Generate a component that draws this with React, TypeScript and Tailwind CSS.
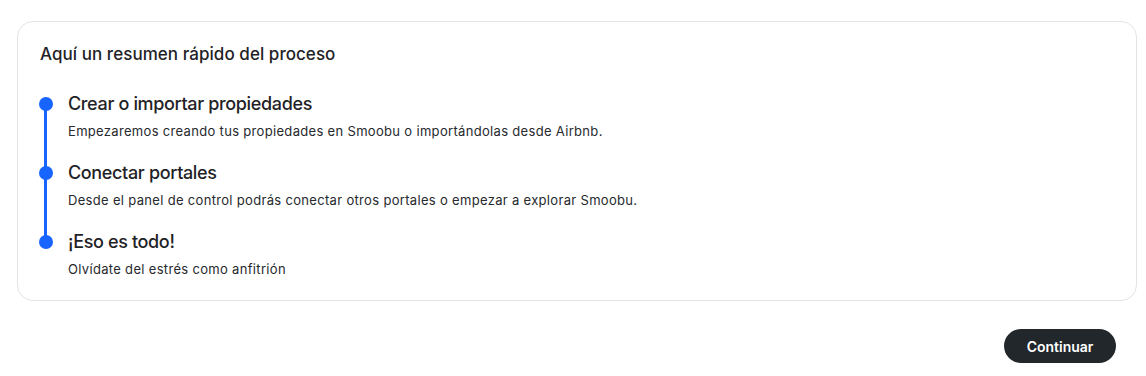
const steps = [
  {
    title: "Crear o importar propiedades",
    text: "Empezaremos creando tus propiedades en Smoobu o importándolas desde Airbnb.",
  },
  {
    title: "Conectar portales",
    text: "Desde el panel de control podrás conectar otros portales o empezar a explorar Smoobu.",
  },
  {
    title: "¡Eso es todo!",
    text: "Olvídate del estrés como anfitrión",
  },
];

export default function App() {
  return (
    <main className="min-h-screen bg-white px-[17px] pt-[21px] font-['Inter',sans-serif] text-[#1f2226]">
      {/* summary card */}
      <section className="w-[1120px] h-[280px] rounded-[16px] border border-[#e3e4e8] pt-[19px]">
        <h2 className="pl-[22px] text-[17px] leading-[26px] font-medium tracking-[0.05px]">
          Aquí un resumen rápido del proceso
        </h2>

        <ol className="mt-[25px] pl-[21px]">
          {steps.map((s, i) => (
            <li key={s.title} className="relative flex gap-[15px] h-[69px]">
              {i < steps.length - 1 && (
                <span className="absolute left-[5px] top-[12px] h-[69px] w-[3px] bg-[#1764ff]" />
              )}
              <span className="relative mt-[5px] h-[14px] w-[14px] shrink-0 rounded-full bg-[#1764ff]" />
              <div>
                <p className="text-[18px] leading-[24px] font-medium tracking-[-0.35px]">{s.title}</p>
                <p className="mt-[5px] text-[13px] leading-[20px] tracking-[0.32px] text-[#26292d]">{s.text}</p>
              </div>
            </li>
          ))}
        </ol>
      </section>

      {/* footer */}
      <div className="flex justify-end pr-[13px] mt-[28px]">
        <button className="h-[34px] w-[112px] rounded-full bg-[#22272b] text-[14px] font-semibold text-white">
          Continuar
        </button>
      </div>
    </main>
  );
}
